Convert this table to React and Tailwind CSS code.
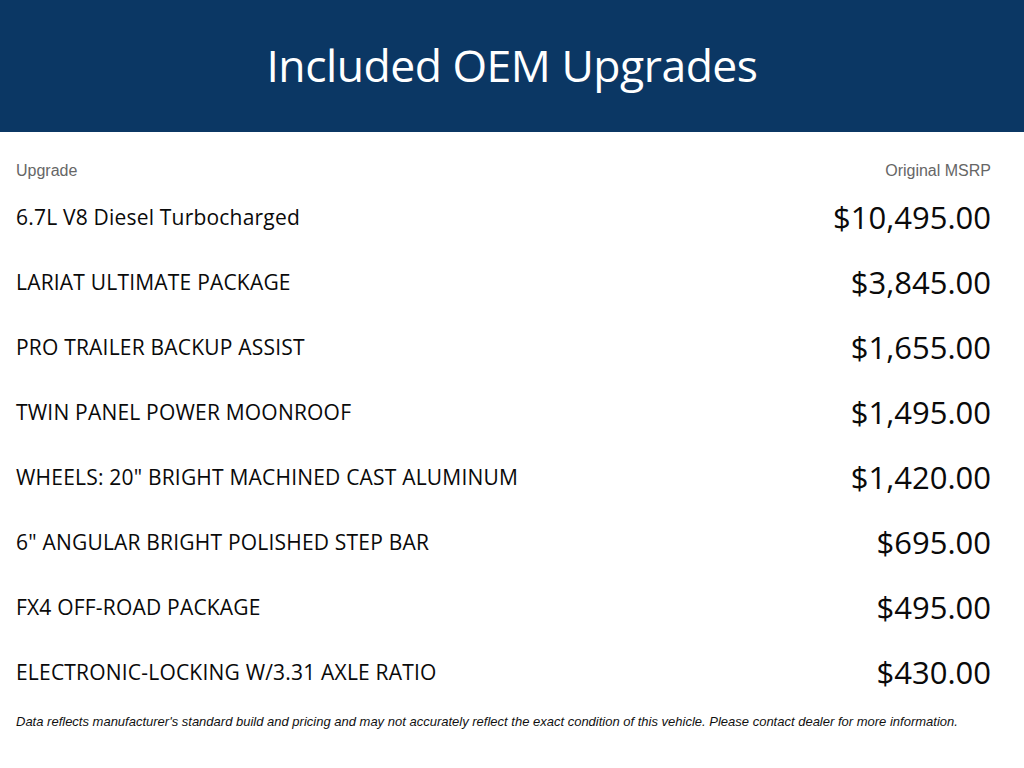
export default function App() {
  const rows = [
    ["6.7L V8 Diesel Turbocharged", "$10,495.00"],
    ["LARIAT ULTIMATE PACKAGE", "$3,845.00"],
    ["PRO TRAILER BACKUP ASSIST", "$1,655.00"],
    ["TWIN PANEL POWER MOONROOF", "$1,495.00"],
    ['WHEELS: 20" BRIGHT MACHINED CAST ALUMINUM', "$1,420.00"],
    ['6" ANGULAR BRIGHT POLISHED STEP BAR', "$695.00"],
    ["FX4 OFF-ROAD PACKAGE", "$495.00"],
    ["ELECTRONIC-LOCKING W/3.31 AXLE RATIO", "$430.00"],
  ];
  return (
    <div className="w-[1024px] h-[768px] bg-white">
      <div className="h-[132px] bg-[#0b3764] flex items-center justify-center">
        <h1 className="text-white text-[44.5px] leading-none pb-[2px] font-['Open_Sans',sans-serif] tracking-[-0.5px]">
          Included OEM Upgrades
        </h1>
      </div>
      <div className="pl-4 pr-[33px]">
        <div className="mt-[29px] h-5 flex justify-between items-center text-[16px] text-[#666] font-['Liberation_Sans',sans-serif]">
          <span>Upgrade</span>
          <span>Original MSRP</span>
        </div>
        <div className="mt-[4px]">
          {rows.map(([name, price]) => (
            <div key={name} className="h-[65px] flex justify-between items-center text-[#0a0a0a] font-['Open_Sans',sans-serif]">
              <span className="text-[21px] tracking-[0.2px]">{name}</span>
              <span className="text-[31px]">{price}</span>
            </div>
          ))}
        </div>
        <div className="mt-[7px] text-[13px] italic text-[#111] font-['Liberation_Sans',sans-serif] whitespace-nowrap">
          Data reflects manufacturer's standard build and pricing and may not accurately reflect the exact condition of this vehicle. Please contact dealer for more information.
        </div>
      </div>
    </div>
  );
}
